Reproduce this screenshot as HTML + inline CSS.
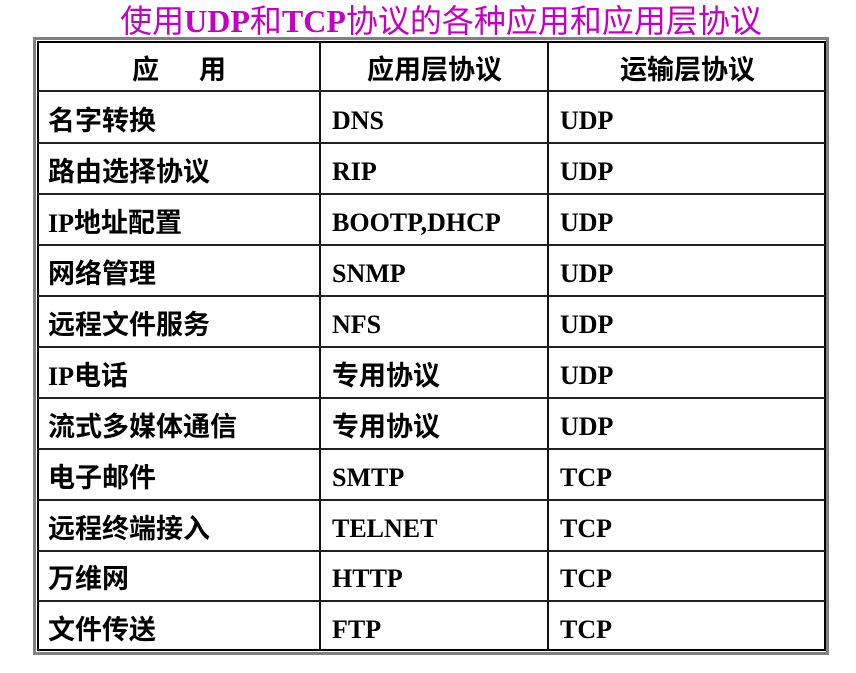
<!DOCTYPE html>
<html><head><meta charset="utf-8"><style>
body{margin:0;width:856px;height:673px;background:#fff;position:relative;overflow:hidden}
.t{position:absolute;left:0;width:882px;top:1px;text-align:center;font:32px/40px "Liberation Serif","WenQuanYi Zen Hei","Noto Sans CJK SC",serif;color:#c400c4;white-space:nowrap}
.t b{font-weight:bold}
.g{position:absolute;left:33px;top:37px;width:790px;height:612px;border:3px solid #808080}
.k{position:absolute;left:37px;top:41px;width:785px;height:606px;border:2px solid #000}
.h{position:absolute;left:38px;width:787px;height:2px;background:#222}
.v{position:absolute;top:41px;width:2px;height:610px;background:#111}
.c{position:absolute;font:bold 26px/30px "Liberation Serif","WenQuanYi Zen Hei","Noto Sans CJK SC",serif;color:#000;white-space:nowrap}
.c span,.z{font-size:27px}
.c span{font-family:"WenQuanYi Zen Hei","Noto Sans CJK SC",sans-serif}
.z{font-family:"WenQuanYi Zen Hei","Noto Sans CJK SC",sans-serif;transform:translateY(-2px)}
</style></head><body>
<div class="t">使用<b>UDP</b>和<b>TCP</b>协议的各种应用和应用层协议</div>
<div class="g"></div><div class="k"></div>
<div class="v" style="left:319px"></div><div class="v" style="left:547px"></div>
<div class="h" style="top:90px"></div><div class="h" style="top:142px"></div><div class="h" style="top:193px"></div><div class="h" style="top:244px"></div><div class="h" style="top:295px"></div><div class="h" style="top:346px"></div><div class="h" style="top:397px"></div><div class="h" style="top:448px"></div><div class="h" style="top:499px"></div><div class="h" style="top:550px"></div><div class="h" style="top:600px"></div>
<div class="c z" style="left:132px;top:55px">应</div><div class="c z" style="left:199px;top:55px">用</div>
<div class="c z" style="left:367px;top:55px">应用层协议</div>
<div class="c z" style="left:620px;top:55px">运输层协议</div>
<div class="c z" style="left:48px;top:106px">名字转换</div><div class="c" style="left:332px;top:106px">DNS</div><div class="c" style="left:560px;top:106px">UDP</div>
<div class="c z" style="left:48px;top:157px">路由选择协议</div><div class="c" style="left:332px;top:157px">RIP</div><div class="c" style="left:560px;top:157px">UDP</div>
<div class="c" style="left:48px;top:206px">IP<span>地址配置</span></div><div class="c" style="left:332px;top:208px">BOOTP,DHCP</div><div class="c" style="left:560px;top:208px">UDP</div>
<div class="c z" style="left:48px;top:259px">网络管理</div><div class="c" style="left:332px;top:259px">SNMP</div><div class="c" style="left:560px;top:259px">UDP</div>
<div class="c z" style="left:48px;top:310px">远程文件服务</div><div class="c" style="left:332px;top:310px">NFS</div><div class="c" style="left:560px;top:310px">UDP</div>
<div class="c" style="left:48px;top:359px">IP<span>电话</span></div><div class="c z" style="left:332px;top:361px">专用协议</div><div class="c" style="left:560px;top:361px">UDP</div>
<div class="c z" style="left:48px;top:412px">流式多媒体通信</div><div class="c z" style="left:332px;top:412px">专用协议</div><div class="c" style="left:560px;top:412px">UDP</div>
<div class="c z" style="left:48px;top:463px">电子邮件</div><div class="c" style="left:332px;top:463px">SMTP</div><div class="c" style="left:560px;top:463px">TCP</div>
<div class="c z" style="left:48px;top:514px">远程终端接入</div><div class="c" style="left:332px;top:514px">TELNET</div><div class="c" style="left:560px;top:514px">TCP</div>
<div class="c z" style="left:48px;top:564px">万维网</div><div class="c" style="left:332px;top:564px">HTTP</div><div class="c" style="left:560px;top:564px">TCP</div>
<div class="c z" style="left:48px;top:615px">文件传送</div><div class="c" style="left:332px;top:615px">FTP</div><div class="c" style="left:560px;top:615px">TCP</div>
</body></html>
